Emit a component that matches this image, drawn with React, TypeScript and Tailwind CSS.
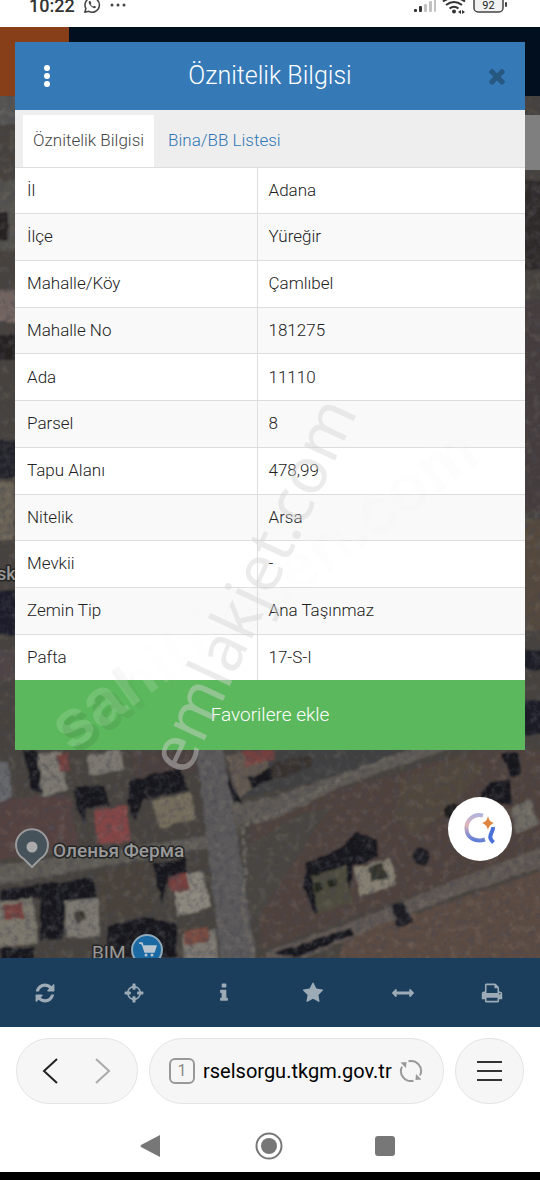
import type { ReactNode } from 'react';

const rows = [
    ['İl', 'Adana'],
    ['İlçe', 'Yüreğir'],
    ['Mahalle/Köy', 'Çamlıbel'],
    ['Mahalle No', '181275'],
    ['Ada', '11110'],
    ['Parsel', '8'],
    ['Tapu Alanı', '478,99'],
    ['Nitelik', 'Arsa'],
    ['Mevkii', '-'],
    ['Zemin Tip', 'Ana Taşınmaz'],
    ['Pafta', '17-S-I'],
];

const tools = [
    {
        label: 'Yenile',
        d: 'M1639 1056q0 5-1 7-64 268-268 434.5t-478 166.5q-146 0-282.5-55t-243.5-157l-129 129q-19 19-45 19t-45-19-19-45v-448q0-26 19-45t45-19h448q26 0 45 19t19 45-19 45l-137 137q71 66 161 102t187 36q134 0 250-65t186-179q11-17 53-117 8-23 30-23h192q13 0 22.5 9.5t9.5 22.5zm25-800v448q0 26-19 45t-45 19h-448q-26 0-45-19t-19-45 19-45l138-138q-148-137-349-137-134 0-250 65t-186 179q-11 17-53 117-8 23-30 23h-199q-13 0-22.5-9.5t-9.5-22.5v-7q65-268 270-434.5t480-166.5q146 0 284 55.5t245 156.5l130-129q19-19 45-19t45 19 19 45z',
    },
    {
        label: 'Konum',
        d: 'M1325 1024h-109q-26 0-45-19t-19-45v-128q0-26 19-45t45-19h109q-32-108-112.5-188.5t-188.5-112.5v109q0 26-19 45t-45 19h-128q-26 0-45-19t-19-45v-109q-108 32-188.5 112.5t-112.5 188.5h109q26 0 45 19t19 45v128q0 26-19 45t-45 19h-109q32 108 112.5 188.5t188.5 112.5v-109q0-26 19-45t45-19h128q26 0 45 19t19 45v109q108-32 188.5-112.5t112.5-188.5zm339-192v128q0 26-19 45t-45 19h-143q-37 161-154.5 278.5t-278.5 154.5v143q0 26-19 45t-45 19h-128q-26 0-45-19t-19-45v-143q-161-37-278.5-154.5t-154.5-278.5h-143q-26 0-45-19t-19-45v-128q0-26 19-45t45-19h143q37-161 154.5-278.5t278.5-154.5v-143q0-26 19-45t45-19h128q26 0 45 19t19 45v143q161 37 278.5 154.5t154.5 278.5h143q26 0 45 19t19 45z',
    },
    {
        label: 'Bilgi',
        d: 'M1216 1344v128q0 26-19 45t-45 19h-512q-26 0-45-19t-19-45v-128q0-26 19-45t45-19h64v-384h-64q-26 0-45-19t-19-45v-128q0-26 19-45t45-19h384q26 0 45 19t19 45v576h64q26 0 45 19t19 45zm-128-1152v192q0 26-19 45t-45 19h-256q-26 0-45-19t-19-45v-192q0-26 19-45t45-19h256q26 0 45 19t19 45z',
    },
    {
        label: 'Favoriler',
        d: 'M1728 647q0 22-26 48l-363 354 86 500q1 7 1 20 0 21-10.5 35.5t-30.5 14.5q-19 0-40-12l-449-236-449 236q-22 12-40 12-21 0-31.5-14.5t-10.5-35.5q0-6 2-20l86-500-364-354q-25-27-25-48 0-37 56-46l502-73 225-455q19-41 49-41t49 41l225 455 502 73q56 9 56 46z',
    },
    {
        label: 'Ölçüm',
        d: 'M1792 896q0 26-19 45l-256 256q-19 19-45 19t-45-19-19-45v-128h-1024v128q0 26-19 45t-45 19-45-19l-256-256q-19-19-19-45t19-45l256-256q19-19 45-19t45 19 19 45v128h1024v-128q0-26 19-45t45-19 45 19l256 256q19 19 19 45z',
    },
    {
        label: 'Yazdır',
        d: 'M448 1536h896v-256h-896v256zm0-640h896v-384h-160q-40 0-68-28t-28-68v-160h-640v640zm1152 64q0-26-19-45t-45-19-45 19-19 45 19 45 45 19 45-19 19-45zm128 0v416q0 13-9.5 22.5t-22.5 9.5h-224v160q0 40-28 68t-68 28h-960q-40 0-68-28t-28-68v-160h-224q-13 0-22.5-9.5t-9.5-22.5v-416q0-79 56.5-135.5t135.5-56.5h64v-544q0-40 28-68t68-28h672q40 0 88 20t76 48l152 152q28 28 48 76t20 88v256h64q79 0 135.5 56.5t56.5 135.5z',
    },
];

const timesPath =
    'M1490 1322q0 40-28 68l-136 136q-28 28-68 28t-68-28l-294-294-294 294q-28 28-68 28t-68-28l-136-136q-28-28-28-68t28-68l294-294-294-294q-28-28-28-68t28-68l136-136q28-28 68-28t68 28l294 294 294-294q28-28 68-28t68 28l136 136q28 28 28 68t-28 68l-294 294 294 294q28 28 28 68z';

function StatusBar() {
    return (
        <div className="flex h-[27px] items-start justify-between overflow-hidden bg-white pl-[29px] pr-8 text-[#333]">
            <div className="flex items-start gap-2">
                <span className="text-lg leading-3 font-medium">10:22</span>
                <svg viewBox="0 0 20 20" className="-mt-1 size-[18px]" fill="none" stroke="#444" strokeWidth="1.7">
                    <path d="M2 18l1.2-4.2A8 8 0 1 1 6.4 17z" strokeLinejoin="round" />
                    <path
                        d="M7 5.6c-1.200 1-.8 3.200 1.600 5.600s4.800 3 5.700 1.600l-.1-1-1.900-.9-1 .9c-1.100-.3-2.400-1.600-2.800-2.700l.8-.9L8.400 5.700z"
                        fill="#444"
                        stroke="none"
                    />
                </svg>
                <svg viewBox="0 0 18 10" className="h-[10px] w-[18px]" fill="#444">
                    <circle cx="3" cy="5" r="1.500" />
                    <circle cx="9" cy="5" r="1.500" />
                    <circle cx="15" cy="5" r="1.500" />
                </svg>
            </div>
            <svg viewBox="0 0 96 16" className="h-4 w-24">
                <g fill="#333">
                    <rect x="2" y="9" width="3" height="3" rx="1" />
                    <rect x="7" y="6" width="3" height="6" rx="1" />
                </g>
                <g fill="#c2c2c2">
                    <rect x="12" y="4" width="3" height="8" rx="1" />
                    <rect x="17" y="1" width="3" height="11" rx="1" />
                    <rect x="22" y="-3" width="2" height="15" rx="1" />
                </g>
                <g fill="none" stroke="#333" strokeWidth="2">
                    <path d="M31 1.500Q42-6 53 1.500M34 5Q42-1 50 5M37.500 8.500Q42 5 46.500 8.500" />
                </g>
                <circle cx="42" cy="11.500" r="2" fill="#333" />
                <path d="M46 12l3-2v4zM50 10l3 2-3 2z" fill="#333" />
                <rect x="62" y="-6" width="29" height="18" rx="4" fill="#f2f2f2" stroke="#444" strokeWidth="1.500" />
                <rect x="93" y="2" width="2" height="5" rx="1" fill="#444" />
                <text x="76.500" y="9" textAnchor="middle" fontSize="11" fill="#222">
                    92
                </text>
            </svg>
        </div>
    );
}

function SatelliteMap() {
    return (
        <svg
            viewBox="0 27 540 931"
            preserveAspectRatio="xMidYMin slice"
            className="absolute inset-0 size-full"
            aria-hidden="true"
        >
            <defs>
                <filter id="rough" x="0" y="0" width="100%" height="100%">
                    <feTurbulence type="fractalNoise" baseFrequency="0.1" numOctaves="2" seed="4" result="n" />
                    <feDisplacementMap
                        in="SourceGraphic"
                        in2="n"
                        scale="5"
                        xChannelSelector="R"
                        yChannelSelector="G"
                    />
                    <feGaussianBlur stdDeviation="0.8" />
                </filter>
                <filter id="grain" x="0" y="0" width="100%" height="100%">
                    <feTurbulence type="fractalNoise" baseFrequency="0.16" numOctaves="4" seed="9" />
                    <feColorMatrix values="0 0 0 0 0.06  0 0 0 0 0.06  0 0 0 0 0.08  2.4 0 0 0 -1.05" />
                </filter>
                <filter id="speckle" x="0" y="0" width="100%" height="100%">
                    <feTurbulence type="fractalNoise" baseFrequency="0.12" numOctaves="4" seed="21" />
                    <feColorMatrix values="0 0 0 0 0.5  0 0 0 0 0.45  0 0 0 0 0.38  0 2 0 0 -1" />
                </filter>
            </defs>
            <g filter="url(#rough)">
                <rect x="-10" y="20" width="560" height="950" fill="#47423e" />

                {/* fields */}
                <path d="M-10 800L70 795 78 848-10 862z" fill="#54433f" />
                <path d="M130 752h62l5 18-60 12z" fill="#4c3f3c" />
                <path d="M100 872l45-8 8 50-54 3z" fill="#4a433b" />
                <path d="M250 826L330 792 480 750H550V850L400 900 262 950z" fill="#4f423e" />
                <path d="M240 850l60-36 30-6-40 60-40 60z" fill="#4a4541" />
                <path d="M400 780l60-24 25 10-30 40-40 30-20-20z" fill="#51463c" />
                <path d="M345 937L550 868V970H335z" fill="#5c4c43" />
                <path d="M238 750h182l-90 28-96 22z" fill="#40413f" />

                {/* roads */}
                <path d="M196 745h26l10 56 24 160h-35l-14-118z" fill="#5b5a5a" />
                <path d="M-10 866L100 852 206 836l4 12-80 14L-10 886z" fill="#5f5b56" />
                <path d="M230 804l45-7 60-21 78-28h40l-110 37-68 34-38 6z" fill="#5e5a54" />
                <path d="M265 952l65-22 70-27 60-25 90-33v20l-85 27-60 23-100 43h-40z" fill="#605953" />
                <path
                    d="M244 826l36-14 60-34 60-24M242 828l4 40-4 40 12 50"
                    fill="none"
                    stroke="#6d6760"
                    strokeWidth="3"
                    strokeDasharray="7 3"
                />

                {/* shadows */}
                <g fill="#12151f">
                    <path d="M24 750h13l8 45-14-6zM74 787l30-2 5 20-22 4-2 15-10-18z" />
                    <path d="M130 780l50-12 9 22-46 10-8 22-8-20z" />
                    <path d="M0 890l38-6 4 14-42 6zM40 885l52-8 6 20-34 12-2 30-22 2z" />
                    <path d="M152 864l34-6 2 16-22 10-4 20z" />
                    <path d="M108 925l38-8 32 8-2 33h-70z" />
                    <path d="M0 948h34v12H0z" />
                    <path d="M306 863l34-15 16-16 21 8 1 18-25 8-5 36-34 12-10-28z" />
                    <path d="M478 800l10-17 22-4 2 26zM500 753l12 25 10-4-4-22z" />
                    <path d="M272 953l78-25 5 6-60 24z" />
                    <path d="M224 765l8 35 12 6-8-14z" />
                </g>
                <circle cx="421" cy="856" r="9" fill="#1c1c20" />
                <path d="M391 906l12-4 10 20-14 6z" fill="#1a1b20" />
                <circle cx="452" cy="811" r="8" fill="#1e1c1e" />

                {/* buildings */}
                <g fill="#7b776f">
                    <path d="M38 754l24-2 5 38-25 6z" />
                    <path d="M-8 762l16 0 4 35-20 8z" fill="#65666a" />
                    <path d="M88 755l32-5 3 20-34 5z" />
                    <path d="M150 801l40-8 6 26-36 9z" fill="#746d5c" />
                    <path d="M-5 902l38-4 5 45-42 5z" fill="#7c776c" />
                    <path d="M64 901l34-3 2 38-34 2z" />
                    <path d="M172 877l30-6 9 36-33 9z" fill="#8b867c" />
                    <path d="M226 756l40-6 4 30-32 16z" fill="#62594f" />
                    <path d="M182 934l34-4 2 30h-34z" />
                    <path d="M354 868l36-10 7 26-37 13z" fill="#857f71" />
                    <path d="M311 876l34-10 7 36-34 12z" fill="#4e4b3d" />
                    <path d="M512 808l18-8 8 24-22 10z" fill="#6f6c64" />
                </g>
                <g fill="#15171d">
                    <path d="M248 778l26-12 4 12-25 10z" />
                    <path d="M270 764l40-10 4 12-40 14z" fill="#39322f" />
                    <path d="M368 868l14-6 6 16-16 4z" fill="#303029" />
                    <path d="M74 912l10-2 2 10-10 4z" fill="#38352e" />
                    <path d="M314 884l8-2 1 8-8 2zM328 880l8-2 1 8-8 2z" fill="#24261f" />
                </g>

                {/* red roofs */}
                <g fill="#74403d">
                    <path d="M94 810l33-4 3 36-33 2z" fill="#834544" />
                    <path d="M56 755l12-3 2 18-10 2z" />
                    <path d="M242 750h32v10l-28 6z" />
                    <path d="M168 878l18-5 4 16-18 4z" />
                    <path d="M2 905l20-3 3 16-20 2z" />
                    <path d="M183 932l24-5 2 14-24 4z" fill="#7a4c40" />
                </g>

                {/* narrow strips beside the dialog */}
                <path d="M-8 95h26v30H-8z" fill="#565452" />
                <path d="M-8 180h26v70H-8z" fill="#55524d" />
                <path d="M-8 212h16l0 28h-16zM-8 335h26v25H-8z" fill="#262320" />
                <path d="M-8 290h26v32H-8z" fill="#71635e" />
                <path d="M-8 440h26v38H-8z" fill="#20222b" />
                <path d="M-8 482h22v58H-8z" fill="#6a6357" />
                <path d="M-8 590h26v45H-8z" fill="#1c1f2c" />
                <path d="M-8 650h26v30H-8z" fill="#4f4545" />
                <path d="M524 180h20v90h-20z" fill="#2d2b2c" />
                <path d="M524 300h20v210h-20z" fill="#453d3e" />
                <path d="M524 520h20v110h-20z" fill="#54493e" />
                <path d="M524 650h20v20h-20zM524 700h20v35h-20z" fill="#1c1e26" />
            </g>
            <rect y="27" width="540" height="931" filter="url(#grain)" opacity="0.5" />
            <rect y="27" width="540" height="931" filter="url(#speckle)" opacity="0.18" />

            <rect y="27" width="540" height="69" fill="#020f1f" />
            <rect y="27" width="69" height="69" fill="#873f1a" />
            <rect x="525" y="115" width="15" height="55" fill="#7f7f7f" />

            <g fill="#999" stroke="#262626" strokeWidth="3" paintOrder="stroke" strokeLinejoin="round">
                <text x="53" y="857" fontSize="19" fontWeight="500">
                    Оленья Ферма
                </text>
                <text x="92" y="959" fontSize="19">
                    BIM
                </text>
                <text x="-3" y="580" fontSize="18" fontWeight="500">
                    sk
                </text>
            </g>
            <path d="M32 867l-8-8a16 16 0 1 1 16 0z" fill="#46525a" stroke="#9a9a9a" strokeWidth="2" />
            <circle cx="32" cy="847" r="5.500" fill="#aaa" />
            <circle cx="147" cy="950" r="15" fill="#1a69a3" stroke="#8fa9b9" strokeWidth="2" />
            <path d="M139 943h3l3 9h9l2-6h-12" fill="#b9c6cf" stroke="#b9c6cf" strokeWidth="1.500" />
            <circle cx="146" cy="955" r="1.500" fill="#b9c6cf" />
            <circle cx="152" cy="955" r="1.500" fill="#b9c6cf" />
        </svg>
    );
}

function Watermarks() {
    return (
        <svg
            viewBox="0 27 540 931"
            preserveAspectRatio="xMidYMin slice"
            className="pointer-events-none absolute inset-0 size-full"
            aria-hidden="true"
        >
            <defs>
                <linearGradient id="fade">
                    <stop offset="0" stopColor="#000" stopOpacity="0.09" />
                    <stop offset="0.15" stopColor="#000" stopOpacity="0.05" />
                    <stop offset="0.19" stopColor="#000" stopOpacity="0.004" />
                    <stop offset="1" stopColor="#000" stopOpacity="0.008" />
                </linearGradient>
            </defs>
            <g fontSize="66" fontWeight="700" fontFamily="'Liberation Sans', sans-serif">
                <text fill="url(#fade)" transform="translate(76 756) rotate(-36)">
                    sahibinden.com
                </text>
                <text fill="#fff" fillOpacity="0.14" transform="translate(70 752) rotate(-36)">
                    sahibinden.com
                </text>
            </g>
            <text
                fill="#d2d2d2"
                fillOpacity="0.45"
                fontSize="64"
                fontFamily="'Noto Sans', sans-serif"
                transform="translate(187 778) rotate(-65)"
            >
                emlakjet.com
            </text>
        </svg>
    );
}

function ParcelDialog() {
    return (
        <section aria-label="Öznitelik Bilgisi" className="relative mx-[15px] bg-white">
            <header className="flex h-[68px] items-center justify-between bg-[#357ab7] px-4 text-white">
                <button type="button" aria-label="Menü" className="flex size-8 flex-col items-center justify-center gap-0.5">
                    <span className="size-1.5 rounded-full bg-white" />
                    <span className="size-1.5 rounded-full bg-white" />
                    <span className="size-1.5 rounded-full bg-white" />
                </button>
                <h1 className="text-[25px] font-light">Öznitelik Bilgisi</h1>
                <button type="button" aria-label="Kapat" className="flex w-8 items-center justify-end">
                    <svg viewBox="0 0 1792 1792" className="size-6" fill="#265882">
                        <path d={timesPath} />
                    </svg>
                </button>
            </header>

            <nav className="flex h-[58px] items-end border-b border-[#ddd] bg-[#eee] px-2 text-[17px] font-light">
                <a href="#oznitelik" className="flex h-[52px] items-center bg-white px-[10px] text-[#444]">
                    Öznitelik Bilgisi
                </a>
                <a href="#bina" className="flex h-[52px] items-center px-[14px] text-[#2f76b5]">
                    Bina/BB Listesi
                </a>
            </nav>

            <table className="h-[512px] w-full border-collapse text-left text-[17px] font-light text-[#222]">
                <tbody>
                    {rows.map(([name, value]) => (
                        <tr key={name} className="border-b border-[#ddd] last:border-b-0 even:bg-[#f9f9f9]">
                            <th scope="row" className="w-[242px] border-r border-[#ddd] px-3 font-light">
                                {name}
                            </th>
                            <td className="px-[11px]">{value}</td>
                        </tr>
                    ))}
                </tbody>
            </table>

            <button type="button" className="h-[70px] w-full bg-[#5cb85c] text-[19px] font-light text-white">
                Favorilere ekle
            </button>
        </section>
    );
}

function Pill({ className, children }: { className: string; children: ReactNode }) {
    return (
        <div className={`flex h-[66px] items-center rounded-full border border-[#e4e4e4] bg-[#f6f6f6] ${className}`}>
            {children}
        </div>
    );
}

function BrowserBar() {
    return (
        <div className="flex gap-[11px] bg-white px-4 pt-[11px]">
            <Pill className="w-[122px] justify-between px-5">
                <button type="button" aria-label="Geri">
                    <svg viewBox="0 0 28 28" className="size-7" fill="none" stroke="#222" strokeWidth="2">
                        <path d="M20 2L7 14l13 12" />
                    </svg>
                </button>
                <button type="button" aria-label="İleri">
                    <svg viewBox="0 0 28 28" className="size-7" fill="none" stroke="#aaa" strokeWidth="2">
                        <path d="M7 2l13 12L7 26" />
                    </svg>
                </button>
            </Pill>
            <Pill className="min-w-0 flex-1 justify-between px-[19px]">
                <button
                    type="button"
                    aria-label="Sekmeler"
                    className="flex size-[26px] shrink-0 items-center justify-center rounded-md border-2 border-[#999] text-base text-[#888]"
                >
                    1
                </button>
                <input
                    type="text"
                    aria-label="Adres"
                    defaultValue="rselsorgu.tkgm.gov.tr"
                    className="min-w-0 flex-1 bg-transparent pl-2 text-xl text-black outline-none"
                />
                <button type="button" aria-label="Yeniden yükle" className="shrink-0">
                    <svg viewBox="0 0 26 26" className="size-[26px]" fill="none" stroke="#999" strokeWidth="2">
                        <path d="M10.500 3.300A10 10 0 0 1 22 17.400M4 8.600A10 10 0 0 0 15.500 22.700" />
                        <path d="M2.500 4.500l6-.5-.5 6zM23.500 21.500l-6 .5.5-6z" fill="#999" stroke="none" />
                    </svg>
                </button>
            </Pill>
            <Pill className="w-[69px] justify-center">
                <button type="button" aria-label="Seçenekler" className="flex w-[25px] flex-col gap-[7px]">
                    <span className="h-0.5 w-full bg-[#333]" />
                    <span className="h-0.5 w-full bg-[#333]" />
                    <span className="h-0.5 w-full bg-[#333]" />
                </button>
            </Pill>
        </div>
    );
}

export default function App() {
    return (
        <div className="flex min-h-screen flex-col bg-white font-[Roboto,sans-serif]">
            <StatusBar />

            <main className="relative overflow-hidden pt-[15px] pb-[208px]">
                <SatelliteMap />
                <ParcelDialog />
                <Watermarks />
                <button
                    type="button"
                    aria-label="Asistan"
                    className="absolute right-7 bottom-[97px] flex size-16 items-center justify-center rounded-full bg-white"
                >
                    <svg viewBox="0 0 34 34" className="size-[34px]" fill="none" strokeWidth="4">
                        <defs>
                            <linearGradient id="ring" x1="0.600" y1="0" x2="0.500" y2="1">
                                <stop offset="0" stopColor="#b3b4dc" />
                                <stop offset="0.450" stopColor="#e0b3b6" />
                                <stop offset="1" stopColor="#5f7fd6" />
                            </linearGradient>
                        </defs>
                        <path d="M20 3.500C11 1 3 8 3.500 17c.5 9 9 13.500 18.500 10.500" stroke="url(#ring)" />
                        <path d="M30 15c.5 4.500-4 7.500-2.500 11.500.6 1.500 1.500 2.500 3 4" stroke="#4a71d8" />
                        <path d="M25 4c1 4.500 2.500 6 6 7-3.500 1.500-5 3-6 7-1-4-2.500-5.500-6-7 3.500-1 5-2.500 6-7z" fill="#e0853f" />
                    </svg>
                </button>
            </main>

            <nav className="flex h-[69px] items-center bg-[#1b3e5c] pr-[3px]">
                {tools.map((tool) => (
                    <button key={tool.label} type="button" aria-label={tool.label} className="flex flex-1 justify-center">
                        <svg viewBox="0 0 1792 1792" className="size-[22px]" fill="#9dabb7">
                            <path d={tool.d} />
                        </svg>
                    </button>
                ))}
            </nav>

            <BrowserBar />

            <div className="flex h-[68px] items-center justify-center gap-[92px] pt-4 pr-[6px]">
                <button type="button" aria-label="Sistem geri">
                    <svg viewBox="0 0 24 24" className="size-6" fill="#777">
                        <path d="M21 1v22L2 13q-1-1 0-2z" />
                    </svg>
                </button>
                <button type="button" aria-label="Ana ekran">
                    <svg viewBox="0 0 28 28" className="size-7">
                        <circle cx="14" cy="14" r="12.500" fill="none" stroke="#777" strokeWidth="2" />
                        <circle cx="14" cy="14" r="8" fill="#777" />
                    </svg>
                </button>
                <button type="button" aria-label="Son uygulamalar">
                    <svg viewBox="0 0 20 20" className="size-5" fill="#777">
                        <rect width="20" height="20" rx="3" />
                    </svg>
                </button>
            </div>
            <div className="h-2 bg-black" />
        </div>
    );
}
